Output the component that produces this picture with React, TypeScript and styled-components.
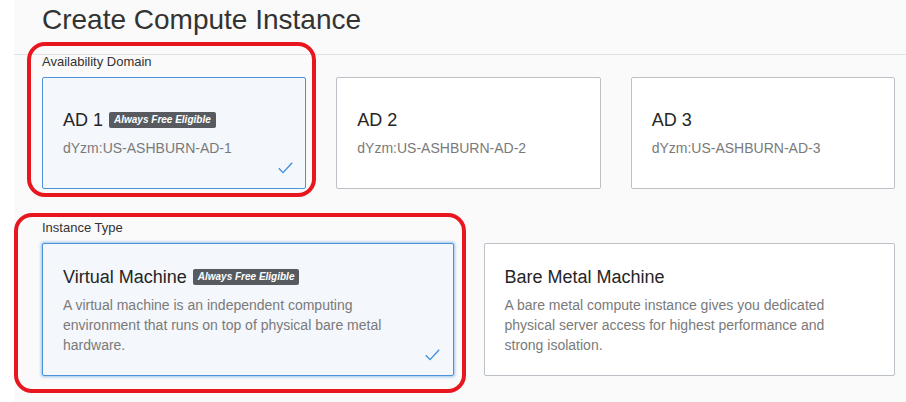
import React from "react";
import styled, { createGlobalStyle } from "styled-components";

const Global = createGlobalStyle`
  html, body { margin: 0; padding: 0; background: #ffffff; }
  body { font-family: "Liberation Sans", Arial, sans-serif; }
  * { box-sizing: border-box; }
`;

const Page = styled.div`
  position: relative;
  width: 906px;
  height: 402px;
  overflow: hidden;
  padding-left: 14px;
  background: #ffffff;
`;

const Main = styled.div`
  height: 100%;
  background: #fafafa;
`;

const Header = styled.header`
  height: 55px;
  padding: 4px 0 0 28px;
  border-bottom: 1px solid #e3e3e3;
`;

const Title = styled.h1`
  margin: 0;
  font-size: 28px;
  line-height: 32px;
  font-weight: 400;
  color: #333333;
`;

const Section = styled.section<{ $top: number }>`
  padding: ${(p) => p.$top}px 11px 0 28px;
`;

const Label = styled.div`
  font-size: 13px;
  line-height: 13px;
  color: #333333;
  margin-bottom: 9px;
`;

const Grid = styled.div<{ $cols: number }>`
  display: grid;
  grid-template-columns: repeat(${(p) => p.$cols}, 1fr);
  gap: 30px;
`;

const Card = styled.div<{ $selected?: boolean; $glow?: boolean; $center?: boolean; $h: number }>`
  position: relative;
  height: ${(p) => p.$h}px;
  display: flex;
  flex-direction: column;
  justify-content: ${(p) => (p.$center ? "center" : "flex-start")};
  padding: ${(p) => (p.$center ? "0 20px" : "21px 20px 0")};
  border: 1px solid ${(p) => (p.$selected ? "#4a93dc" : "#bcc1c7")};
  border-radius: 2px;
  background: ${(p) => (p.$selected ? "#f4f7fc" : "#ffffff")};
  box-shadow: ${(p) => (p.$glow ? "0 0 3px 1px rgba(74,147,220,0.55)" : "none")};
`;

const CardTitle = styled.div`
  display: flex;
  align-items: center;
  gap: 6px;
  font-size: 18px;
  line-height: 24px;
  color: #252525;
`;

const Badge = styled.span`
  display: inline-block;
  height: 16px;
  padding: 0 5px;
  border-radius: 2px;
  background: #575b5f;
  color: #ffffff;
  font-size: 10px;
  font-weight: 700;
  font-style: italic;
  line-height: 16px;
`;

const Sub = styled.div`
  margin-top: 6px;
  font-size: 14px;
  line-height: 20px;
  color: #7a7a7a;
`;

const Desc = styled.p`
  margin: 6px 0 0;
  max-width: 340px;
  font-size: 14px;
  line-height: 20px;
  color: #7a7a7a;
`;

const Check = styled.svg<{ $r: number; $b: number }>`
  position: absolute;
  right: ${(p) => p.$r}px;
  bottom: ${(p) => p.$b}px;
  width: 15px;
  height: 12px;
`;

const Annotation = styled.div<{ $x: number; $y: number; $w: number; $h: number }>`
  position: absolute;
  left: ${(p) => p.$x}px;
  top: ${(p) => p.$y}px;
  width: ${(p) => p.$w}px;
  height: ${(p) => p.$h}px;
  border: 4px solid #e8161f;
  border-radius: 18px;
  pointer-events: none;
`;

const CheckMark = ({ r, b }: { r: number; b: number }) => (
  <Check $r={r} $b={b} viewBox="0 0 15 12">
    <path d="M0.8 6.2 L5 10.6 L14.2 0.8" fill="none" stroke="#3a8ddb" strokeWidth="1.3" />
  </Check>
);

const ads = [
  { name: "AD 1", id: "dYzm:US-ASHBURN-AD-1", free: true },
  { name: "AD 2", id: "dYzm:US-ASHBURN-AD-2", free: false },
  { name: "AD 3", id: "dYzm:US-ASHBURN-AD-3", free: false },
];

const types = [
  {
    name: "Virtual Machine",
    desc: "A virtual machine is an independent computing environment that runs on top of physical bare metal hardware.",
    free: true,
  },
  {
    name: "Bare Metal Machine",
    desc: "A bare metal compute instance gives you dedicated physical server access for highest performance and strong isolation.",
    free: false,
  },
];

export default function App() {
  return (
    <>
      <Global />
      <Page>
        <Main>
          <Header>
            <Title>Create Compute Instance</Title>
          </Header>
          <Section $top={0}>
            <Label>Availability Domain</Label>
            <Grid $cols={3}>
              {ads.map((ad) => (
                <Card key={ad.name} $selected={ad.free} $center $h={112}>
                  <CardTitle>
                    {ad.name}
                    {ad.free && <Badge>Always Free Eligible</Badge>}
                  </CardTitle>
                  <Sub>{ad.id}</Sub>
                  {ad.free && <CheckMark r={12} b={14} />}
                </Card>
              ))}
            </Grid>
          </Section>
          <Section $top={32}>
            <Label>Instance Type</Label>
            <Grid $cols={2}>
              {types.map((t) => (
                <Card key={t.name} $selected={t.free} $glow={t.free} $h={133}>
                  <CardTitle>
                    {t.name}
                    {t.free && <Badge>Always Free Eligible</Badge>}
                  </CardTitle>
                  <Desc>{t.desc}</Desc>
                  {t.free && <CheckMark r={13} b={14} />}
                </Card>
              ))}
            </Grid>
          </Section>
        </Main>
        <Annotation $x={27} $y={42} $w={289} $h={155} />
        <Annotation $x={14} $y={213} $w={452} $h={180} />
      </Page>
    </>
  );
}
